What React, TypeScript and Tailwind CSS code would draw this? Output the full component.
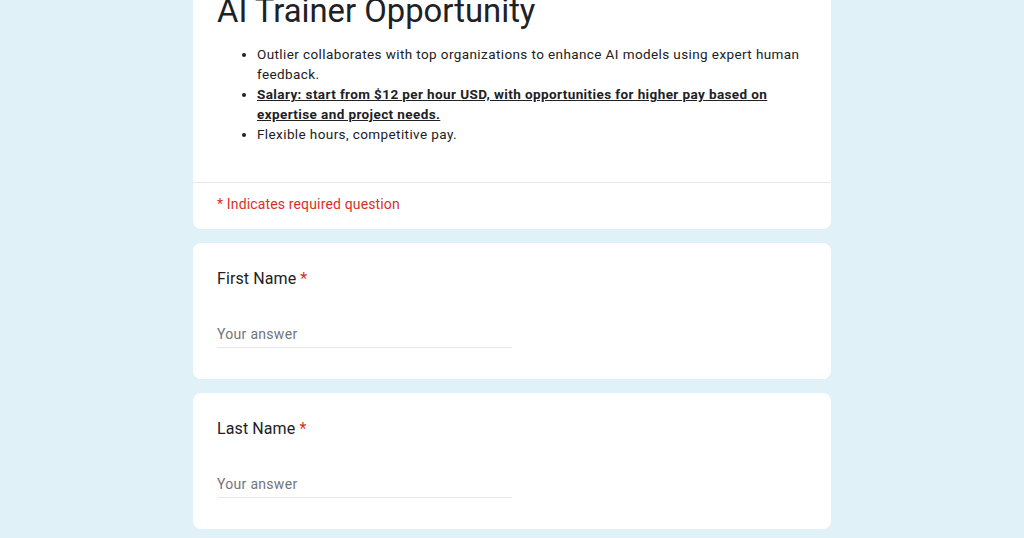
import React from 'react';

const font = { fontFamily: 'Roboto, "Noto Sans", Arial, sans-serif' };

function QuestionCard({ label }: { label: string }) {
  return (
    <div className="rounded-lg bg-white px-6 pt-6 pb-[31px]">
      <div className="text-[16px] leading-6 tracking-[0.1px] text-[#202124]">
        {label} <span className="text-[#d93025]">*</span>
      </div>
      <div className="mt-[33px] w-[295px] border-b border-[#e6e8eb] pb-[3px]">
        <input
          type="text"
          placeholder="Your answer"
          className="block h-5 w-full bg-transparent text-[14px] leading-5 tracking-[0.3px] text-[#202124] outline-none placeholder:text-[#70757a]"
        />
      </div>
    </div>
  );
}

export default function App() {
  return (
    <div className="min-h-screen w-full overflow-hidden bg-[#e0f1f7]" style={font}>
      <div className="mx-auto -mt-[9px] flex w-[638px] flex-col gap-[14px]">
        {/* header card */}
        <div className="rounded-b-lg bg-white">
          <div className="px-6 pb-[38px]">
            <h1 className="text-[32.8px] leading-10 font-normal text-[#202124]">
              AI Trainer Opportunity
            </h1>
            <ul className="mt-[13px] list-disc pl-10 text-[13.5px] leading-5 tracking-[0.4px] text-[#202124]">
              <li>
                Outlier collaborates with top organizations to enhance AI models using expert human
                feedback.
              </li>
              <li className="font-bold underline">
                Salary: start from $12 per hour USD, with opportunities for higher pay based on
                expertise and project needs.
              </li>
              <li>Flexible hours, competitive pay.</li>
            </ul>
          </div>
          <div className="border-t border-[#e6e8ea] px-6 pt-[11px] pb-[15px] text-[14px] leading-5 tracking-[0.15px] text-[#d93025]">
            * Indicates required question
          </div>
        </div>

        <QuestionCard label="First Name" />
        <QuestionCard label="Last Name" />
      </div>
    </div>
  );
}
